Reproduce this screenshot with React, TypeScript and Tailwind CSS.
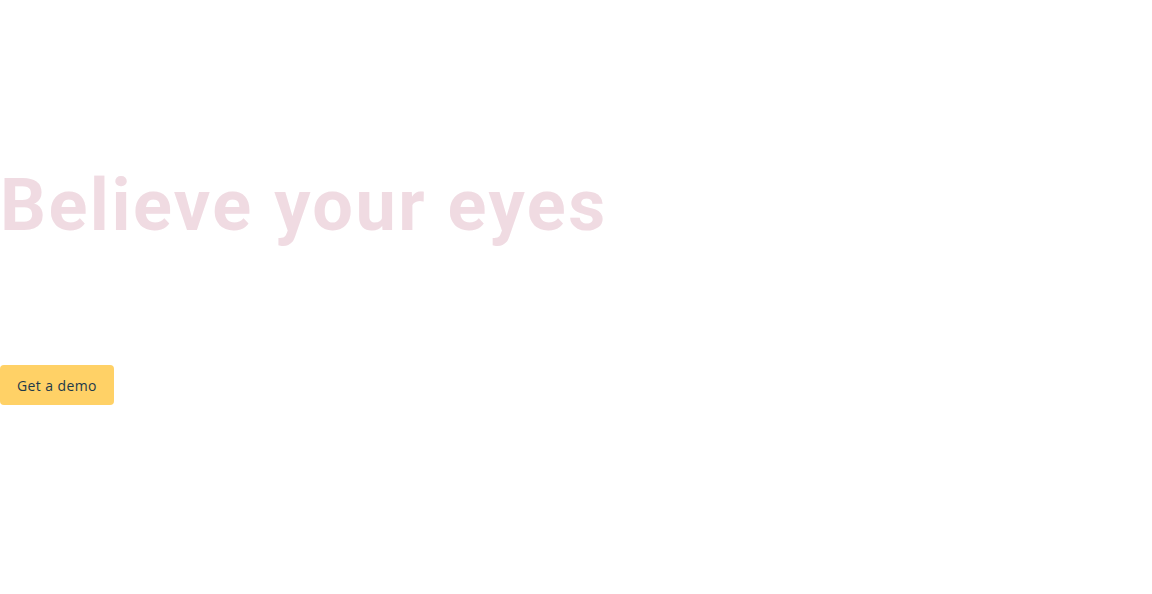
export default function App() {
  return (
    <div className="min-h-[594px] w-full bg-white">
      <section className="flex flex-col items-start pt-[170px]">
        <h1 className="font-['Roboto',sans-serif] text-[72px] font-bold leading-none tracking-[2.5px] text-[#f0dbe2]">
          Believe your eyes
        </h1>
        <button className="mt-[123px] h-10 rounded-[4px] bg-[#ffd166] px-[17px] font-['Open_Sans',sans-serif] text-[14px] tracking-[0.4px] text-[#1d3a4a]">
          Get a demo
        </button>
      </section>
    </div>
  )
}
